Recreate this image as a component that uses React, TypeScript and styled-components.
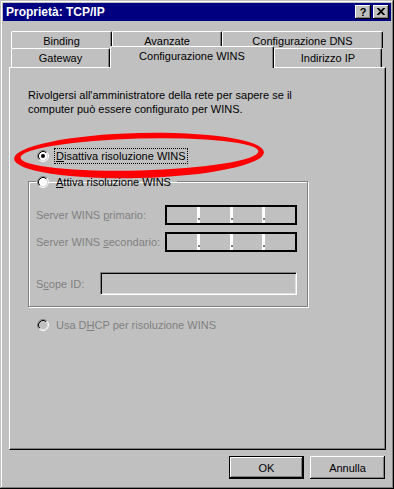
import styled, { createGlobalStyle } from "styled-components";

const GlobalStyle = createGlobalStyle`
  body {
    margin: 0;
    background: #c0c0c0;
  }
  * {
    box-sizing: border-box;
  }
`;

const Window = styled.div`
  position: relative;
  width: 394px;
  height: 489px;
  padding: 3px;
  background: #c0c0c0;
  box-shadow: inset -1px -1px 0 #000, inset 1px 1px 0 #c0c0c0,
    inset -2px -2px 0 #808080, inset 2px 2px 0 #fff;
  font-family: "Liberation Sans", Arial, sans-serif;
  font-size: 11px;
  color: #000;
  display: flex;
  flex-direction: column;
`;

const TitleBar = styled.div`
  height: 18px;
  background: #000080;
  display: flex;
  align-items: center;
  padding: 0 2px 0 3px;
`;

const TitleText = styled.span`
  flex: 1;
  color: #fff;
  font-weight: bold;
  font-size: 12px;
`;

const TitleButtons = styled.div`
  display: flex;
  gap: 2px;
`;

const TitleButton = styled.div`
  width: 16px;
  height: 14px;
  background: #c0c0c0;
  box-shadow: inset -1px -1px 0 #000, inset 1px 1px 0 #fff,
    inset -2px -2px 0 #808080;
  display: flex;
  align-items: center;
  justify-content: center;
  font-weight: bold;
  font-size: 11px;
  line-height: 14px;
  padding-bottom: 1px;
`;

const Body = styled.div`
  flex: 1;
  padding: 10px 5px 0 6px;
  display: flex;
  flex-direction: column;
`;

const TabStrip = styled.div`
  padding-left: 2px;
`;

const TabRow = styled.div<{ $h: number }>`
  display: flex;
  height: ${(p) => p.$h}px;
`;

const Tab = styled.div<{ $w: number; $active?: boolean }>`
  position: relative;
  z-index: ${(p) => (p.$active ? 2 : 0)};
  width: ${(p) => p.$w}px;
  height: ${(p) => (p.$active ? "22px" : "100%")};
  margin-top: ${(p) => (p.$active ? "-2px" : "0")};
  background: #c0c0c0;
  border-top: 1px solid #fff;
  border-left: 1px solid #fff;
  border-right: 1px solid #000;
  box-shadow: inset -1px 0 0 #808080;
  border-radius: 2px 2px 0 0;
  text-align: center;
  line-height: 13px;
  padding-top: 3px;
  white-space: nowrap;
`;

const Panel = styled.div`
  position: relative;
  z-index: 1;
  height: 383px;
  border-top: 1px solid #fff;
  border-left: 1px solid #fff;
  border-right: 1px solid #000;
  border-bottom: 1px solid #000;
  box-shadow: inset -1px -1px 0 #808080;
  padding-left: 18px;
  display: flex;
  flex-direction: column;
`;

const Description = styled.p`
  margin: 20px 0 0;
  line-height: 14px;
  white-space: nowrap;
`;

const RadioRow = styled.div<{ $top: number }>`
  display: flex;
  align-items: center;
  height: 16px;
  margin: ${(p) => p.$top}px 0 0 9px;
`;

const RadioSvg = styled.svg`
  flex: none;
  display: block;
`;

const RadioLabel = styled.span<{ $focused?: boolean; $disabled?: boolean }>`
  margin-left: 5px;
  padding: 0 1px;
  height: 16px;
  line-height: 14px;
  border: 1px ${(p) => (p.$focused ? "dotted #000" : "solid transparent")};
  color: ${(p) => (p.$disabled ? "#808080" : "#000")};
  white-space: nowrap;
`;

const GroupBox = styled.fieldset`
  margin: 11px 0 0;
  width: 280px;
  height: 132px;
  padding: 0 10px 0 7px;
  border: 1px solid #808080;
  box-shadow: 1px 1px 0 #fff, inset 1px 1px 0 #fff;
  min-width: 0;
`;

const Legend = styled.legend`
  display: flex;
  align-items: center;
  height: 13px;
  padding: 0 4px 0 1px;
`;

const FieldRow = styled.div<{ $top: number }>`
  display: flex;
  align-items: center;
  justify-content: space-between;
  margin-top: ${(p) => p.$top}px;
`;

const FieldLabel = styled.span`
  color: #808080;
  white-space: nowrap;
`;

const IpBox = styled.div`
  width: 132px;
  height: 20px;
  border: 2px solid #000;
  background: #fff;
  display: flex;
`;

const IpPart = styled.div`
  flex: 1;
  background: #c0c0c0;
`;

const IpDot = styled.div`
  width: 3px;
  display: flex;
  align-items: flex-end;
  padding-bottom: 3px;

  &::after {
    content: "";
    width: 2px;
    height: 2px;
    margin-left: 1px;
    background: #808080;
  }
`;

const ScopeBox = styled.div`
  width: 197px;
  height: 23px;
  border: 1px solid;
  border-color: #808080 #fff #fff #808080;
  box-shadow: inset 1px 1px 0 #000, inset -1px -1px 0 #dfdfdf;
  background: #c0c0c0;
`;

const ButtonRow = styled.div`
  display: flex;
  justify-content: flex-end;
  gap: 6px;
  margin-top: 6px;
  padding-right: 1px;
`;

const Button = styled.div<{ $default?: boolean }>`
  width: 75px;
  height: 23px;
  background: #c0c0c0;
  display: flex;
  align-items: center;
  justify-content: center;
  border: ${(p) => (p.$default ? "1px solid #000" : "none")};
  box-shadow: inset -1px -1px 0 #000, inset 1px 1px 0 #fff,
    inset -2px -2px 0 #808080;
`;

const Highlight = styled.svg`
  position: absolute;
  left: 10px;
  top: 128px;
  pointer-events: none;
  z-index: 5;
`;

const Radio = ({
  checked,
  disabled,
}: {
  checked?: boolean;
  disabled?: boolean;
}) => (
  <RadioSvg width="12" height="12" viewBox="0 0 12 12">
    <circle cx="6" cy="6" r="4.2" fill={disabled ? "#c0c0c0" : "#fff"} />
    <path d="M2.11 9.89 A5.5 5.5 0 0 1 9.89 2.11" fill="none" stroke="#808080" />
    <path d="M9.89 2.11 A5.5 5.5 0 0 1 2.11 9.89" fill="none" stroke="#fff" />
    <path d="M2.82 9.18 A4.5 4.5 0 0 1 9.18 2.82" fill="none" stroke="#000" />
    <path d="M9.18 2.82 A4.5 4.5 0 0 1 2.82 9.18" fill="none" stroke="#dfdfdf" />
    {checked && <circle cx="6" cy="6" r="2" fill="#000" />}
  </RadioSvg>
);

const IpAddress = () => (
  <IpBox>
    <IpPart />
    <IpDot />
    <IpPart />
    <IpDot />
    <IpPart />
    <IpDot />
    <IpPart />
  </IpBox>
);

export default function App() {
  return (
    <>
      <GlobalStyle />
      <Window>
        <TitleBar>
          <TitleText>Proprietà: TCP/IP</TitleText>
          <TitleButtons>
            <TitleButton>?</TitleButton>
            <TitleButton>
              <svg width="8" height="7" viewBox="0 0 8 7">
                <path
                  d="M0 0h2l2 2.2L6 0h2v0.6L5.2 3.5 8 6.4V7H6L4 4.8 2 7H0v-0.6L2.8 3.5 0 0.6z"
                  fill="#000"
                />
              </svg>
            </TitleButton>
          </TitleButtons>
        </TitleBar>

        <Body>
          <TabStrip>
            <TabRow $h={17}>
              <Tab $w={101}>Binding</Tab>
              <Tab $w={110}>Avanzate</Tab>
              <Tab $w={161}>Configurazione DNS</Tab>
            </TabRow>
            <TabRow $h={19}>
              <Tab $w={99}>Gateway</Tab>
              <Tab $w={164} $active>
                Configurazione WINS
              </Tab>
              <Tab $w={108}>Indirizzo IP</Tab>
            </TabRow>
          </TabStrip>

          <Panel>
            <Description>
              Rivolgersi all'amministratore della rete per sapere se il
              <br />
              computer può essere configurato per WINS.
            </Description>

            <RadioRow $top={32}>
              <Radio checked />
              <RadioLabel $focused>
                <u>D</u>isattiva risoluzione WINS
              </RadioLabel>
            </RadioRow>

            <GroupBox>
              <Legend>
                <Radio />
                <RadioLabel>
                  <u>A</u>ttiva risoluzione WINS
                </RadioLabel>
              </Legend>
              <FieldRow $top={17}>
                <FieldLabel>
                  Server WINS <u>p</u>rimario:
                </FieldLabel>
                <IpAddress />
              </FieldRow>
              <FieldRow $top={7}>
                <FieldLabel>
                  Server WINS <u>s</u>econdario:
                </FieldLabel>
                <IpAddress />
              </FieldRow>
              <FieldRow $top={20}>
                <FieldLabel>
                  S<u>c</u>ope ID:
                </FieldLabel>
                <ScopeBox />
              </FieldRow>
            </GroupBox>

            <RadioRow $top={10}>
              <Radio disabled />
              <RadioLabel $disabled>
                Usa D<u>H</u>CP per risoluzione WINS
              </RadioLabel>
            </RadioRow>
          </Panel>

          <ButtonRow>
            <Button $default>OK</Button>
            <Button>Annulla</Button>
          </ButtonRow>
        </Body>

        <Highlight width="260" height="55" viewBox="0 0 260 55">
          <g transform="rotate(-1.5 129 27.5)">
            <path
              fillRule="evenodd"
              fill="#ff0000"
              d="M4 27.5a125 22.5 0 1 0 250 0a125 22.5 0 1 0 -250 0Z M10.5 26.5a119 16 0 1 0 238 0a119 16 0 1 0 -238 0Z"
            />
          </g>
        </Highlight>
      </Window>
    </>
  );
}
